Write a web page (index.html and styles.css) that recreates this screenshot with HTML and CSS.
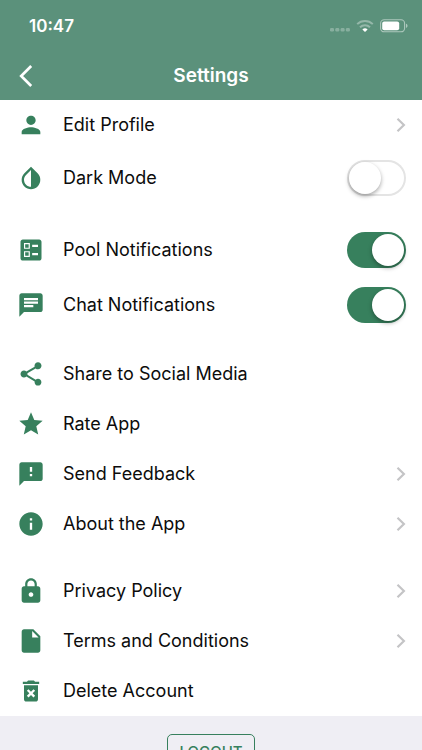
FILE: index.html
```html
<!DOCTYPE html>
<html lang="en">
<head>
<meta charset="utf-8">
<meta name="viewport" content="width=device-width, initial-scale=1">
<title>Settings</title>
<link rel="stylesheet" href="styles.css">
</head>
<body>
<div class="app">
  <header class="header">
    <div class="status">
      <span class="time">10:47</span>
      <span class="indicators">
        <svg width="20" height="5" viewBox="0 0 20 5" fill="#fff" fill-opacity=".28" aria-hidden="true"><rect y="0" width="4" height="3.4" rx="1.2"/><rect x="5.3" y="0" width="4" height="3.4" rx="1.2"/><rect x="10.6" y="0" width="4" height="3.4" rx="1.2"/><rect x="15.9" y="0" width="4" height="3.4" rx="1.2"/></svg>
        <svg width="18" height="14" viewBox="0 0 18 14" fill="none" stroke="#fff" aria-hidden="true"><path d="M1.2 5.1a11.2 11.2 0 0 1 15.6 0M4 8.2a7.2 7.2 0 0 1 10 0" stroke-width="2" stroke-opacity=".35"/><path d="M9 13 6.4 10.4a3.8 3.8 0 0 1 5.2 0z" fill="#fff" stroke="none"/></svg>
        <svg width="28" height="14" viewBox="0 0 28 14" fill="none" aria-hidden="true"><rect x=".6" y=".8" width="24" height="12" rx="3.6" stroke="#fff" stroke-opacity=".5" stroke-width="1.1"/><rect x="2.2" y="2.4" width="17" height="8.8" rx="2" fill="#fff"/><path d="M26 4.8c2 .7 2 3.500 0 4.200z" fill="#fff" fill-opacity=".5"/></svg>
      </span>
    </div>
    <div class="navbar">
      <button class="back" type="button" aria-label="Back"><svg width="14" height="24" viewBox="0 0 14 24" fill="none" stroke="#fff" stroke-width="2.7" aria-hidden="true"><path d="M12.200 2 2.200 12l10 10"/></svg></button>
      <h1 class="title">Settings</h1>
    </div>
  </header>

  <main class="content">
    <div class="panel">
      <section class="group">
        <a class="row" href="#profile">
          <svg class="icon" viewBox="0 0 24 24" aria-hidden="true"><path d="M12 12c2.210 0 4-1.790 4-4s-1.790-4-4-4-4 1.790-4 4 1.790 4 4 4zm0 2c-2.670 0-8 1.340-8 4v2h16v-2c0-2.660-5.330-4-8-4z"/></svg>
          <span class="label">Edit Profile</span>
          <svg class="chevron" viewBox="0 0 10 16" aria-hidden="true"><path d="m1.500 1.800 6.400 6.200-6.400 6.200"/></svg>
        </a>
        <label class="row row-toggle">
          <svg class="icon" viewBox="0 0 24 24" aria-hidden="true"><path d="M17.660 7.930 12 2.270 6.340 7.930c-3.120 3.120-3.120 8.190 0 11.310C7.900 20.800 9.950 21.580 12 21.580s4.100-.78 5.660-2.340c3.120-3.120 3.120-8.190 0-11.310zM12 19.590c-1.600 0-3.110-.62-4.240-1.760C6.620 16.690 6 15.190 6 13.590s.62-3.110 1.760-4.240L12 5.100v14.490z"/></svg>
          <span class="label">Dark Mode</span>
          <input class="switch" type="checkbox" role="switch">
        </label>
      </section>

      <section class="group">
        <label class="row row-toggle">
          <svg class="icon" viewBox="0 0 24 24" aria-hidden="true"><path fill-rule="evenodd" d="M19 3H5c-1.100 0-2 .9-2 2v14c0 1.100.9 2 2 2h14c1.100 0 2-.9 2-2V5c0-1.100-.9-2-2-2zM6 6h5v5H6zm1 1v3h3V7zM6 13h5v5H6zm1 1v3h3v-3zM13 7.500h5v2h-5zm0 7h5v2h-5z"/></svg>
          <span class="label">Pool Notifications</span>
          <input class="switch" type="checkbox" role="switch" checked>
        </label>
        <label class="row row-toggle">
          <svg class="icon" viewBox="0 0 24 24" aria-hidden="true"><path d="M20 2H4c-1.100 0-1.990.9-1.990 2L2 22l4-4h14c1.100 0 2-.9 2-2V4c0-1.100-.9-2-2-2zM6 9h12v2H6V9zm8 5H6v-2h8v2zm4-6H6V6h12v2z"/></svg>
          <span class="label">Chat Notifications</span>
          <input class="switch" type="checkbox" role="switch" checked>
        </label>
      </section>

      <section class="group">
        <a class="row" href="#share">
          <svg class="icon" viewBox="0 0 24 24" aria-hidden="true"><path d="M18 16.080c-.76 0-1.440.3-1.960.77L8.910 12.700c.05-.23.09-.46.09-.7s-.04-.47-.09-.7l7.050-4.110c.54.5 1.250.81 2.040.81 1.660 0 3-1.340 3-3s-1.340-3-3-3-3 1.340-3 3c0 .24.04.47.09.7L8.040 9.810C7.500 9.310 6.790 9 6 9c-1.660 0-3 1.340-3 3s1.340 3 3 3c.79 0 1.500-.31 2.040-.81l7.120 4.160c-.05.21-.08.43-.08.65 0 1.610 1.310 2.920 2.920 2.920s2.920-1.310 2.920-2.920-1.310-2.920-2.920-2.920z"/></svg>
          <span class="label">Share to Social Media</span>
        </a>
        <a class="row" href="#rate">
          <svg class="icon" viewBox="0 0 24 24" aria-hidden="true"><path d="M12 17.270 18.180 21l-1.640-7.030L22 9.240l-7.190-.61L12 2 9.190 8.630 2 9.240l5.460 4.730L5.820 21z"/></svg>
          <span class="label">Rate App</span>
        </a>
        <a class="row" href="#feedback">
          <svg class="icon" viewBox="0 0 24 24" aria-hidden="true"><path d="M20 2H4c-1.100 0-1.990.9-1.990 2L2 22l4-4h14c1.100 0 2-.9 2-2V4c0-1.100-.9-2-2-2zm-7 12h-2v-2h2v2zm0-4h-2V6h2v4z"/></svg>
          <span class="label">Send Feedback</span>
          <svg class="chevron" viewBox="0 0 10 16" aria-hidden="true"><path d="m1.500 1.800 6.400 6.200-6.400 6.200"/></svg>
        </a>
        <a class="row" href="#about">
          <svg class="icon" viewBox="0 0 24 24" aria-hidden="true"><path d="M12 2C6.480 2 2 6.480 2 12s4.480 10 10 10 10-4.480 10-10S17.520 2 12 2zm1 15h-2v-6h2v6zm0-8h-2V7h2v2z"/></svg>
          <span class="label">About the App</span>
          <svg class="chevron" viewBox="0 0 10 16" aria-hidden="true"><path d="m1.500 1.800 6.400 6.200-6.400 6.200"/></svg>
        </a>
      </section>

      <section class="group">
        <a class="row" href="#privacy">
          <svg class="icon" viewBox="0 0 24 24" aria-hidden="true"><path d="M18 8h-1V6c0-2.760-2.240-5-5-5S7 3.240 7 6v2H6c-1.100 0-2 .9-2 2v10c0 1.100.9 2 2 2h12c1.100 0 2-.9 2-2V10c0-1.100-.9-2-2-2zm-6 9c-1.100 0-2-.9-2-2s.9-2 2-2 2 .9 2 2-.9 2-2 2zm3.100-9H8.900V6c0-1.710 1.390-3.100 3.100-3.100s3.100 1.390 3.100 3.100v2z"/></svg>
          <span class="label">Privacy Policy</span>
          <svg class="chevron" viewBox="0 0 10 16" aria-hidden="true"><path d="m1.500 1.800 6.400 6.200-6.400 6.200"/></svg>
        </a>
        <a class="row" href="#terms">
          <svg class="icon" viewBox="0 0 24 24" aria-hidden="true"><path d="M6 2c-1.100 0-1.990.9-1.990 2L4 20c0 1.100.89 2 1.990 2H18c1.100 0 2-.9 2-2V8l-6-6H6zm7 7V3.500L18.500 9H13z"/></svg>
          <span class="label">Terms and Conditions</span>
          <svg class="chevron" viewBox="0 0 10 16" aria-hidden="true"><path d="m1.500 1.800 6.400 6.200-6.400 6.200"/></svg>
        </a>
        <a class="row" href="#delete">
          <svg class="icon" viewBox="0 0 24 24" aria-hidden="true"><path d="M6 19c0 1.100.9 2 2 2h8c1.100 0 2-.9 2-2V7H6v12zm2.460-7.120 1.410-1.410L12 12.590l2.120-2.120 1.410 1.410L13.410 14l2.120 2.120-1.410 1.410L12 15.410l-2.120 2.120-1.410-1.410L10.590 14l-2.130-2.120zM15.500 4l-1-1h-5l-1 1H5v2h14V4z"/></svg>
          <span class="label">Delete Account</span>
        </a>
      </section>
    </div>
    <div class="footer">
      <button class="logout" type="button">LOGOUT</button>
    </div>
  </main>
</div>
</body>
</html>
```
FILE: styles.css
```css
:root {
  --green: #37805d;
  --header: #5b917b;
}

* {
  box-sizing: border-box;
}

body {
  margin: 0;
  background: #efeef4;
  color: #0c0c0c;
  font-family: Inter, "Liberation Sans", sans-serif;
}

.app {
  display: flex;
  flex-direction: column;
  height: 100vh;
}

.header {
  flex: none;
  background: var(--header);
  color: #fff;
}

.status {
  display: flex;
  align-items: center;
  justify-content: space-between;
  height: 52px;
  padding: 0 14px 0 29px;
}

.time {
  font-size: 17px;
  font-weight: 600;
}

.indicators {
  display: flex;
  align-items: flex-end;
  gap: 6px;
}

.navbar {
  display: grid;
  grid-template-columns: 48px 1fr 48px;
  align-items: center;
  height: 48px;
}

.back {
  display: flex;
  padding: 0 0 0 19px;
  border: 0;
  background: none;
}

.title {
  margin: 0;
  font-size: 19px;
  font-weight: 600;
  line-height: 24px;
  text-align: center;
}

.content {
  flex: 1;
  min-height: 0;
  overflow: auto;
  scrollbar-width: none;
}

.panel {
  display: flex;
  flex-direction: column;
  gap: 17px;
  background: #fff;
}

.row {
  display: flex;
  align-items: center;
  gap: 18px;
  height: 50px;
  padding: 0 16px 0 17px;
  color: inherit;
  text-decoration: none;
}

.row-toggle {
  height: 55px;
}

.icon {
  flex: none;
  width: 28px;
  height: 28px;
  fill: var(--green);
}

.label {
  flex: 1;
  font-size: 18px;
  line-height: 24px;
}

.chevron {
  width: 10px;
  height: 16px;
  fill: none;
  stroke: #c4c4c6;
  stroke-width: 2.2;
}

.switch {
  display: flex;
  align-items: center;
  flex: none;
  width: 59px;
  height: 36px;
  margin: 0;
  padding: 0 2px;
  border-radius: 18px;
  appearance: none;
  background: #fff;
  box-shadow: inset 0 0 0 2px #e4e4e4;
}

.switch::before {
  content: "";
  width: 32px;
  height: 32px;
  border-radius: 50%;
  background: #fff;
  box-shadow: 0 2px 4px rgba(0, 0, 0, 0.35);
}

.switch:checked {
  justify-content: flex-end;
  background: var(--green);
  box-shadow: none;
}

.footer {
  display: flex;
  justify-content: center;
  padding: 18px 16px;
}

.logout {
  height: 34px;
  padding: 0 11px;
  border: 1px solid var(--green);
  border-radius: 5px;
  background: none;
  color: var(--green);
  font-family: inherit;
  font-size: 15px;
  font-weight: 500;
}
```
